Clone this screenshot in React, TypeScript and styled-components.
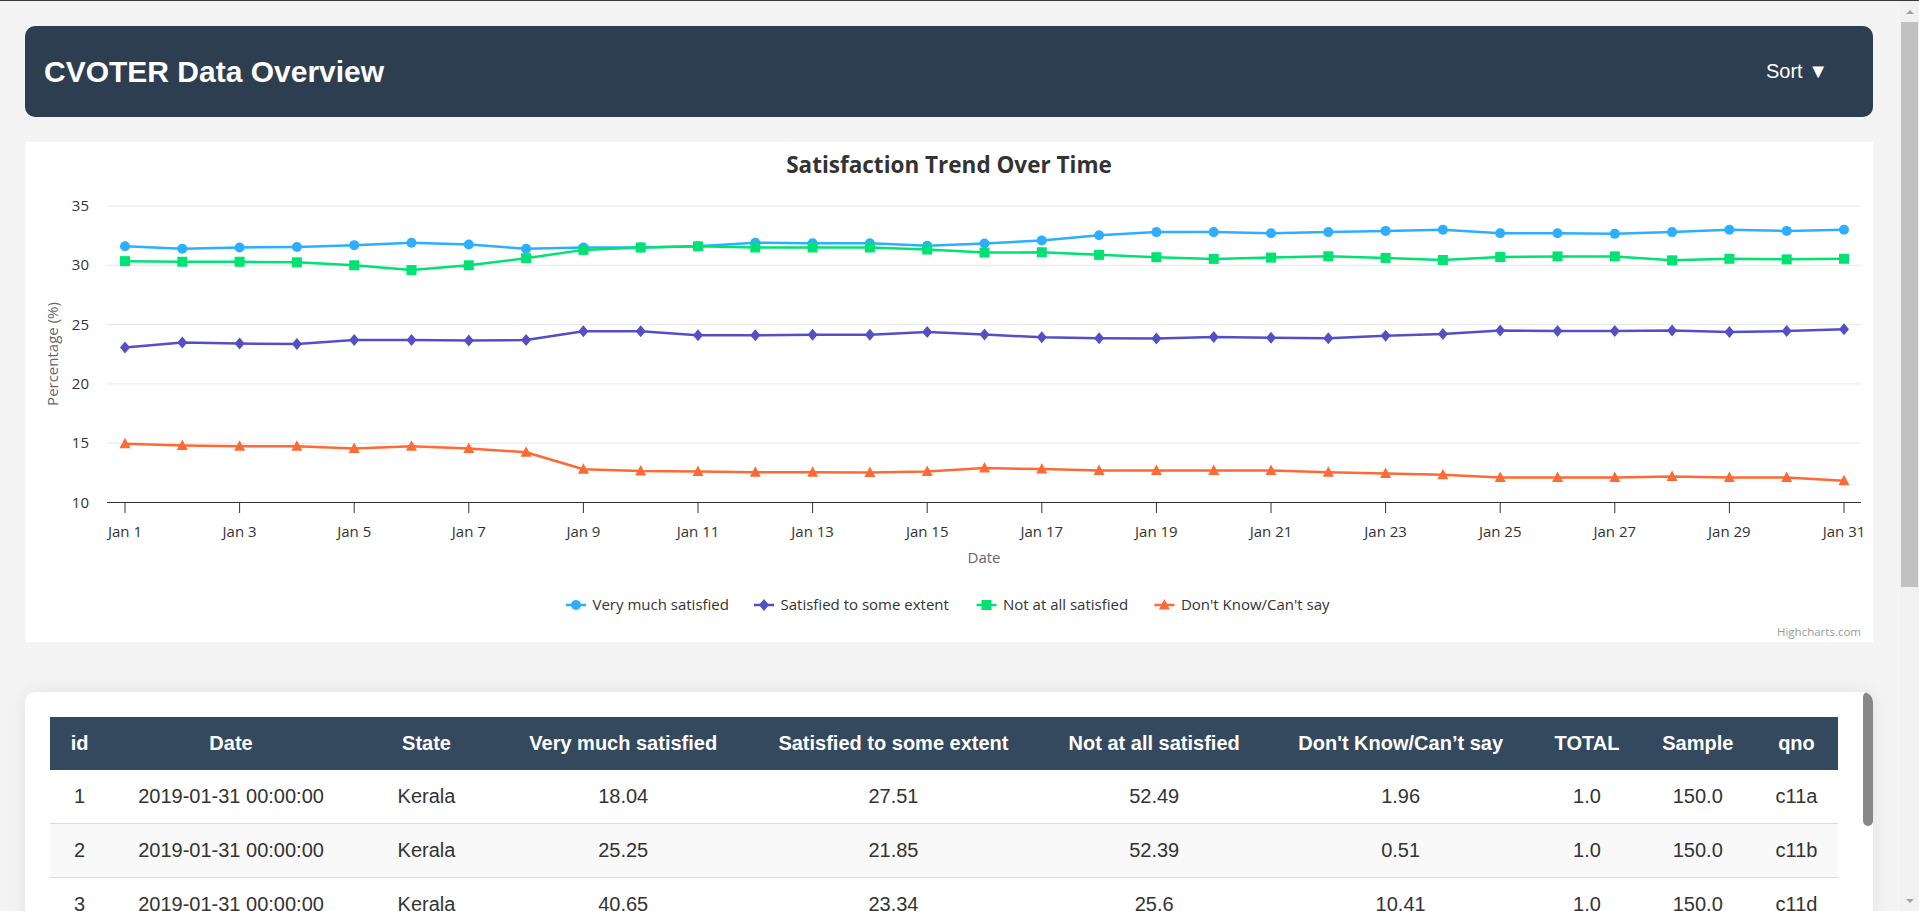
import React from "react";
import styled, { createGlobalStyle } from "styled-components";

const GlobalStyle = createGlobalStyle`
  html {
    background: #f4f4f4;
  }
  body {
    margin: 0;
    border-top: 1px solid #3a3a3a;
    background: #f4f4f4;
    font-family: "Liberation Sans", Arial, sans-serif;
  }
`;

const Page = styled.div`
  display: flex;
  flex-direction: column;
  padding: 25px 46px 25px 25px;
`;

// the browser's own scrollbar, drawn since the page is shot without one
const PageScrollbar = styled.div`
  position: fixed;
  top: 1px;
  right: 0;
  bottom: 0;
  width: 19px;
  display: flex;
  flex-direction: column;
  align-items: center;
  background: #f1f1f1;
`;

const ScrollArrow = styled.div<{ $down?: boolean }>`
  height: 21px;
  display: flex;
  align-items: center;
  justify-content: center;
  margin-top: ${(p) => (p.$down ? "auto" : "0")};

  &::before {
    content: "";
    border-left: 4px solid transparent;
    border-right: 4px solid transparent;
    ${(p) => (p.$down ? "border-top: 4px solid #a3a3a3;" : "border-bottom: 4px solid #a3a3a3;")}
  }
`;

const PageThumb = styled.div`
  width: 17px;
  height: 565px;
  background: #c1c1c1;
`;

const TopBar = styled.header`
  display: flex;
  align-items: center;
  justify-content: space-between;
  height: 91px;
  box-sizing: border-box;
  padding: 0 20px 0 19px;
  background: #2c3e50;
  border-radius: 10px;
  color: #fff;
`;

const Title = styled.h1`
  margin: 0;
  font-size: 30px;
  font-weight: 700;
`;

const SortButton = styled.button`
  background: none;
  border: 0;
  color: #fff;
  font: 20px "Liberation Sans", Arial, sans-serif;
  padding: 10px 25px;
  cursor: pointer;
`;

const ChartCard = styled.section`
  margin-top: 25px;
  height: 500px;
  background: #fff;
`;

const ChartSvg = styled.svg`
  display: block;
  font-family: "Open Sans", "Noto Sans", sans-serif;
`;

const TableCard = styled.section`
  position: relative;
  margin-top: 50px;
  height: 680px;
  box-sizing: border-box;
  padding: 25px 35px 25px 25px;
  overflow: hidden;
  background: #fff;
  border-radius: 10px;
  box-shadow: 0 0 20px rgba(0, 0, 0, 0.08);
`;

const CardThumb = styled.div`
  position: absolute;
  top: 0;
  right: 0;
  width: 10px;
  height: 134px;
  border-radius: 5px;
  background: #888;
`;

const Table = styled.table`
  width: 100%;
  border-collapse: collapse;
  font-size: 20px;
  color: #333;
`;

const HeadCell = styled.th`
  padding: 15px;
  background: #34495e;
  color: #fff;
  font-weight: 700;
  text-align: center;
`;

const Row = styled.tr<{ $striped: boolean }>`
  background: ${(p) => (p.$striped ? "#f9f9f9" : "#fff")};
`;

const Cell = styled.td`
  padding: 15px;
  border-bottom: 1px solid #ddd;
  text-align: center;
`;

type Shape = "circle" | "diamond" | "square" | "triangle";

const series: { name: string; color: string; shape: Shape; data: number[] }[] = [
  {
    name: "Very much satisfied",
    color: "#2caffe",
    shape: "circle",
    data: [31.6, 31.4, 31.5, 31.55, 31.7, 31.9, 31.75, 31.4, 31.5, 31.5, 31.6, 31.9, 31.85, 31.85, 31.65, 31.84,
      32.1, 32.54, 32.8, 32.8, 32.7, 32.8, 32.9, 33.0, 32.7, 32.7, 32.65, 32.8, 33.0, 32.9, 33.0],
  },
  {
    name: "Satisfied to some extent",
    color: "#544fc5",
    shape: "diamond",
    data: [23.06, 23.5, 23.4, 23.37, 23.7, 23.7, 23.65, 23.7, 24.44, 24.44, 24.1, 24.1, 24.15, 24.15, 24.38, 24.16,
      23.93, 23.85, 23.82, 23.96, 23.9, 23.85, 24.07, 24.2, 24.5, 24.45, 24.45, 24.5, 24.38, 24.45, 24.6],
  },
  {
    name: "Not at all satisfied",
    color: "#00e272",
    shape: "square",
    data: [30.35, 30.3, 30.3, 30.25, 30.0, 29.6, 30.0, 30.6, 31.3, 31.5, 31.6, 31.5, 31.5, 31.5, 31.33, 31.07,
      31.1, 30.88, 30.68, 30.54, 30.65, 30.76, 30.62, 30.45, 30.7, 30.75, 30.75, 30.42, 30.55, 30.5, 30.55],
  },
  {
    name: "Don't Know/Can't say",
    color: "#fe6a35",
    shape: "triangle",
    data: [14.95, 14.8, 14.75, 14.75, 14.55, 14.75, 14.55, 14.24, 12.8, 12.65, 12.62, 12.55, 12.55, 12.52, 12.62,
      12.9, 12.82, 12.7, 12.7, 12.7, 12.7, 12.55, 12.45, 12.33, 12.1, 12.1, 12.1, 12.2, 12.1, 12.1, 11.83],
  },
];

// plot geometry, in chart card pixels
const plotLeft = 82;
const plotRight = 1836;
const xOf = (i: number) => 100 + i * 57.3;
const yOf = (v: number) => 360.5 - (v - 10) * 11.86;
const legendX = [541, 729, 951.5, 1129.4];

const Marker: React.FC<{ shape: Shape; x: number; y: number; color: string }> = ({ shape, x, y, color }) => {
  if (shape === "circle") return <circle cx={x} cy={y} r={5} fill={color} />;
  if (shape === "square") return <rect x={x - 5} y={y - 5} width={10} height={10} fill={color} />;
  if (shape === "diamond")
    return <path d={`M${x} ${y - 6}L${x + 5} ${y}L${x} ${y + 6}L${x - 5} ${y}Z`} fill={color} />;
  return <path d={`M${x} ${y - 6}L${x + 5.5} ${y + 4.5}L${x - 5.5} ${y + 4.5}Z`} fill={color} />;
};

const TrendChart: React.FC = () => (
  <ChartSvg width={1848} height={500}>
    <text x={924} y={31} textAnchor="middle" fontSize={22.5} fontWeight={700} fill="#333">
      Satisfaction Trend Over Time
    </text>

    {[15, 20, 25, 30, 35].map((v) => (
      <line key={v} x1={plotLeft} x2={plotRight} y1={yOf(v)} y2={yOf(v)} stroke="#e6e6e6" strokeWidth={1} />
    ))}
    {[10, 15, 20, 25, 30, 35].map((v) => (
      <text key={v} x={64} y={yOf(v) + 5} textAnchor="end" fontSize={15} fill="#333">
        {v}
      </text>
    ))}
    <text x={33} y={212} textAnchor="middle" fontSize={15} fill="#666" transform="rotate(-90 33 212)">
      Percentage (%)
    </text>

    <line x1={plotLeft} x2={plotRight} y1={360.5} y2={360.5} stroke="#333" strokeWidth={1} />
    {Array.from({ length: 16 }, (_, k) => k * 2).map((i) => (
      <g key={i}>
        <line x1={xOf(i)} x2={xOf(i)} y1={360.5} y2={371} stroke="#333" strokeWidth={1} />
        <text x={xOf(i)} y={395} textAnchor="middle" fontSize={15} fill="#333">
          Jan {i + 1}
        </text>
      </g>
    ))}
    <text x={959} y={421} textAnchor="middle" fontSize={15} fill="#666">
      Date
    </text>

    {series.map((s) => (
      <g key={s.name}>
        <polyline
          points={s.data.map((v, i) => `${xOf(i)},${yOf(v)}`).join(" ")}
          fill="none"
          stroke={s.color}
          strokeWidth={2.5}
          strokeLinejoin="round"
        />
        {s.data.map((v, i) => (
          <Marker key={i} shape={s.shape} x={xOf(i)} y={yOf(v)} color={s.color} />
        ))}
      </g>
    ))}

    {series.map((s, k) => (
      <g key={s.name}>
        <line x1={legendX[k]} x2={legendX[k] + 20} y1={463} y2={463} stroke={s.color} strokeWidth={2.5} />
        <Marker shape={s.shape} x={legendX[k] + 10} y={463} color={s.color} />
        <text x={legendX[k] + 26.5} y={468} fontSize={15} fill="#333">
          {s.name}
        </text>
      </g>
    ))}

    <text x={1836} y={494} textAnchor="end" fontSize={11.5} fill="#999">
      Highcharts.com
    </text>
  </ChartSvg>
);

const columns = [
  "id",
  "Date",
  "State",
  "Very much satisfied",
  "Satisfied to some extent",
  "Not at all satisfied",
  "Don't Know/Can\u2019t say",
  "TOTAL",
  "Sample",
  "qno",
];

const firstRows = [
  ["18.04", "27.51", "52.49", "1.96", "c11a"],
  ["25.25", "21.85", "52.39", "0.51", "c11b"],
  ["40.65", "23.34", "25.6", "10.41", "c11d"],
];

const rows = Array.from({ length: 14 }, (_, i) => {
  const seed = (i * 37 + 11) % 97;
  const base = firstRows[i] ?? [
    (10 + (seed % 40) + 0.37).toFixed(2),
    (15 + (seed % 20) + 0.21).toFixed(2),
    (20 + (seed % 35) + 0.48).toFixed(2),
    ((seed % 9) + 0.33).toFixed(2),
    `c1${(i % 8) + 1}${"abcde"[i % 5]}`,
  ];
  const state = i < 10 ? "Kerala" : "Tamil Nadu";
  return [String(i + 1), "2019-01-31 00:00:00", state, base[0], base[1], base[2], base[3], "1.0", "150.0", base[4]];
});

const App: React.FC = () => (
  <>
    <GlobalStyle />
    <Page>
      <TopBar>
        <Title>CVOTER Data Overview</Title>
        <SortButton>Sort ▼</SortButton>
      </TopBar>

      <ChartCard>
        <TrendChart />
      </ChartCard>

      <TableCard>
        <CardThumb />
        <Table>
          <thead>
            <tr>
              {columns.map((c) => (
                <HeadCell key={c}>{c}</HeadCell>
              ))}
            </tr>
          </thead>
          <tbody>
            {rows.map((r, i) => (
              <Row key={i} $striped={i % 2 === 1}>
                {r.map((v, j) => (
                  <Cell key={j}>{v}</Cell>
                ))}
              </Row>
            ))}
          </tbody>
        </Table>
      </TableCard>
    </Page>
    <PageScrollbar>
      <ScrollArrow />
      <PageThumb />
      <ScrollArrow $down />
    </PageScrollbar>
  </>
);

export default App;
